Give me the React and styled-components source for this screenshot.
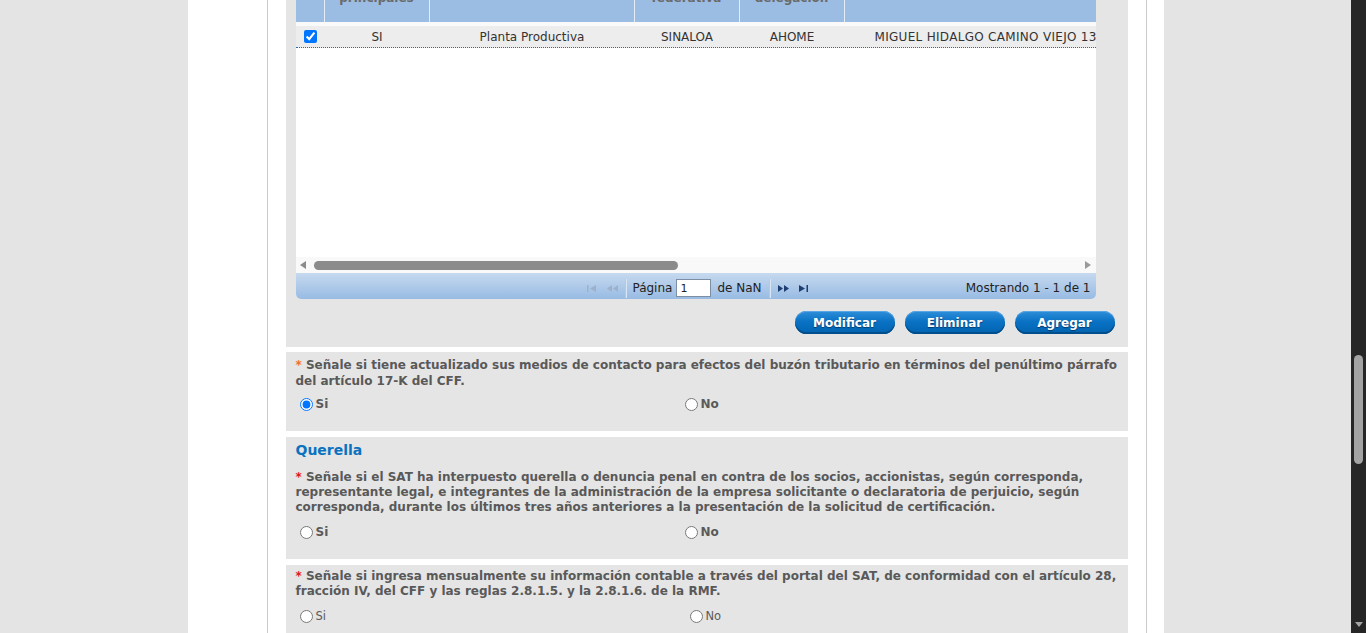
import styled, { createGlobalStyle } from "styled-components";

const GlobalStyle = createGlobalStyle`
  html, body {
    margin: 0;
    padding: 0;
    height: 100%;
    overflow: hidden;
    background: #e4e4e4;
  }
  body {
    font-family: "DejaVu Sans", Verdana, sans-serif;
    color: #333;
  }
`;

const columns = [
  { width: 29 },
  { width: 105, label: "Instalaciones principales" },
  { width: 205, label: "Tipo de instalación", top: true },
  { width: 105, label: "Entidad federativa" },
  { width: 105, label: "Municipio o delegación" },
  { width: 420, label: "Domicilio", top: true },
];

const row = ["", "SI", "Planta Productiva", "SINALOA", "AHOME", "MIGUEL HIDALGO CAMINO VIEJO 1300 COL. CENTRO"];

export default function App() {
  return (
    <>
      <GlobalStyle />
      <Viewport>
        <Sheet>
          <Sidebar />
          <Main>
            <GridPanel>
              <Grid>
                <HeaderRow>
                  {columns.map((c, i) => (
                    <HeadCell key={i} style={{ width: c.width }} $top={c.top}>
                      {c.label}
                    </HeadCell>
                  ))}
                </HeaderRow>
                <Body>
                  <DataRow>
                    {columns.map((c, i) => (
                      <Cell key={i} style={{ width: c.width }} $left={i === 5}>
                        {i === 0 ? <Check type="checkbox" defaultChecked /> : row[i]}
                      </Cell>
                    ))}
                  </DataRow>
                </Body>
                <HScroll>
                  <Arrow viewBox="0 0 6 8">
                    <path d="M6 0 L0 4 L6 8Z" />
                  </Arrow>
                  <Thumb />
                  <Arrow viewBox="0 0 6 8" $right>
                    <path d="M0 0 L6 4 L0 8Z" />
                  </Arrow>
                </HScroll>
                <Pager>
                  <span />
                  <PagerCenter>
                    <PagerIcon $off $w={9} $mr={10} viewBox="0 0 9 7">
                      <rect x="0" y="0" width="1.5" height="7" />
                      <path d="M9 0 L3 3.5 L9 7Z" />
                    </PagerIcon>
                    <PagerIcon $off $w={12} $mr={7} viewBox="0 0 12 7">
                      <path d="M6 0 L1 3.5 L6 7Z M12 0 L7 3.5 L12 7Z" />
                    </PagerIcon>
                    <Sep $mr={6} />
                    <PagerText $mr={4}>Página</PagerText>
                    <PageInput defaultValue="1" />
                    <PagerText $mr={7}>de NaN</PagerText>
                    <Sep $mr={8} />
                    <PagerIcon $w={11} $mr={10} viewBox="0 0 11 7">
                      <path d="M0 0 L5 3.5 L0 7Z M6 0 L11 3.5 L6 7Z" />
                    </PagerIcon>
                    <PagerIcon $w={9} viewBox="0 0 9 7">
                      <path d="M0 0 L6 3.5 L0 7Z" />
                      <rect x="7.5" y="0" width="1.5" height="7" />
                    </PagerIcon>
                  </PagerCenter>
                  <Showing>Mostrando 1 - 1 de 1</Showing>
                </Pager>
              </Grid>
              <Actions>
                <Button>Modificar</Button>
                <Button>Eliminar</Button>
                <Button>Agregar</Button>
              </Actions>
            </GridPanel>

            <Panel $pt={5} $pb={20}>
              <Question $lh={16}>
                <Star $orange>*</Star> Señale si tiene actualizado sus medios de contacto para efectos del
                buzón tributario en términos del penúltimo párrafo del artículo 17-K del CFF.
              </Question>
              <Choices $split={385} $mt={8}>
                <Choice>
                  <Radio type="radio" name="q1" defaultChecked />
                  Si
                </Choice>
                <Choice>
                  <Radio type="radio" name="q1" />
                  No
                </Choice>
              </Choices>
            </Panel>

            <Panel $pt={5} $pb={20}>
              <Title>Querella</Title>
              <Question $lh={15}>
                <Star>*</Star> Señale si el SAT ha interpuesto querella o denuncia penal en contra de los
                socios, accionistas, según corresponda, representante legal, e integrantes de la
                administración de la empresa solicitante o declaratoria de perjuicio, según corresponda,
                durante los últimos tres años anteriores a la presentación de la solicitud de certificación.
              </Question>
              <Choices $split={385} $mt={10}>
                <Choice>
                  <Radio type="radio" name="q2" />
                  Si
                </Choice>
                <Choice>
                  <Radio type="radio" name="q2" />
                  No
                </Choice>
              </Choices>
            </Panel>

            <Panel $pt={4} $pb={20}>
              <Question $lh={15}>
                <Star>*</Star> Señale si ingresa mensualmente su información contable a través del portal
                del SAT, de conformidad con el artículo 28, fracción IV, del CFF y las reglas 2.8.1.5. y la
                2.8.1.6. de la RMF.
              </Question>
              <Choices $split={390} $mt={10}>
                <Choice $plain>
                  <Radio type="radio" name="q3" />
                  Si
                </Choice>
                <Choice $plain>
                  <Radio type="radio" name="q3" />
                  No
                </Choice>
              </Choices>
            </Panel>
          </Main>
        </Sheet>
      </Viewport>
      <PageScrollbar>
        <PageThumb />
        <DownArrow viewBox="0 0 8 5">
          <path d="M0 0 L8 0 L4 5Z" />
        </DownArrow>
      </PageScrollbar>
    </>
  );
}

const Viewport = styled.div`
  width: calc(100% - 15px);
  height: 633px;
  overflow: hidden;
`;

const Sheet = styled.div`
  width: 976px;
  margin: -30px auto 0;
  min-height: 800px;
  background: #fff;
  display: flex;
`;

const Sidebar = styled.div`
  width: 79px;
  flex-shrink: 0;
`;

const Main = styled.div`
  width: 880px;
  box-sizing: border-box;
  border-left: 1px solid #cbcbcb;
  border-right: 1px solid #cbcbcb;
  padding: 0 18px;
  display: flex;
  flex-direction: column;
  gap: 6px;
`;

const GridPanel = styled.div`
  background: #e5e5e5;
  padding: 0 13px 13px 10px;
  margin-bottom: -1px;
`;

const Grid = styled.div`
  width: 800px;
  background: #fff;
  border-radius: 0 0 5px 5px;
  overflow: hidden;
`;

const HeaderRow = styled.div`
  display: flex;
  height: 52px;
  background: #9bbde4;
  overflow: hidden;
  border-bottom: 4px solid #fafafa;
`;

const HeadCell = styled.div`
  flex-shrink: 0;
  box-sizing: border-box;
  border-right: 1px solid #e4ecf6;
  display: flex;
  align-items: ${(p) => (p.$top ? "flex-start" : "flex-end")};
  justify-content: center;
  text-align: center;
  padding: ${(p) => (p.$top ? "2px 4px" : "0 4px 17px")};
  font-size: 12px;
  line-height: 14px;
  font-weight: bold;
  color: #6a6a6a;
`;

const Body = styled.div`
  height: 231px;
  overflow: hidden;
`;

const DataRow = styled.div`
  display: flex;
  height: 21px;
  background: #ededed;
  border-bottom: 1px dotted #1d6fb5;
`;

const Cell = styled.div`
  flex-shrink: 0;
  display: flex;
  align-items: center;
  justify-content: ${(p) => (p.$left ? "flex-start" : "center")};
  padding-left: ${(p) => (p.$left ? "30px" : "0")};
  letter-spacing: ${(p) => (p.$left ? "0.3px" : "0")};
  box-sizing: border-box;
  white-space: nowrap;
  overflow: hidden;
  font-size: 12px;
  color: #333;
`;

const Check = styled.input`
  margin: 0;
  width: 13px;
  height: 13px;
`;

const HScroll = styled.div`
  height: 16px;
  background: #f9f9f9;
  display: flex;
  align-items: center;
  padding: 0 5px 0 4px;
  gap: 8px;
`;

const Arrow = styled.svg`
  width: 6px;
  height: 8px;
  fill: ${(p) => (p.$right ? "#9a9a9a" : "#8a8a8a")};
  margin-left: ${(p) => (p.$right ? "auto" : "0")};
`;

const Thumb = styled.div`
  width: 364px;
  height: 9px;
  border-radius: 5px;
  background: #8b8b8b;
`;

const Pager = styled.div`
  height: 26px;
  box-sizing: border-box;
  padding-top: 4px;
  display: grid;
  grid-template-columns: 1fr auto 1fr;
  align-items: center;
  background: linear-gradient(#c6d9ef, #98bbe3);
  font-size: 12px;
  color: #222;
`;

const PagerCenter = styled.div`
  display: flex;
  align-items: center;
  margin-left: 4px;
`;

const PagerIcon = styled.svg`
  width: ${(p) => p.$w}px;
  height: 7px;
  margin-right: ${(p) => p.$mr || 0}px;
  fill: ${(p) => (p.$off ? "#9db1cc" : "#1f3f72")};
`;

const PagerText = styled.span`
  margin-right: ${(p) => p.$mr}px;
`;

const Sep = styled.span`
  width: 1px;
  height: 19px;
  background: #b2c8e3;
  box-shadow: 1px 0 0 #d8e5f3;
  margin-right: ${(p) => p.$mr}px;
`;

const PageInput = styled.input`
  width: 35px;
  height: 18px;
  box-sizing: border-box;
  border: 1px solid #7f8fa3;
  padding: 0 3px;
  font-family: inherit;
  font-size: 11px;
  color: #222;
  margin: 0 6px 0 0;
`;

const Showing = styled.span`
  justify-self: end;
  padding-right: 5px;
`;

const Actions = styled.div`
  display: flex;
  justify-content: flex-end;
  gap: 10px;
  margin-top: 12px;
`;

const Button = styled.button`
  width: 100px;
  height: 23px;
  border: none;
  border-radius: 12px;
  background: linear-gradient(#2f8fda 0%, #0a72c4 45%, #0063b0 100%);
  box-shadow: inset 0 -2px 0 #004e8c, inset 0 1px 0 #5aa6e4;
  color: #fff;
  font-family: inherit;
  font-size: 12px;
  font-weight: bold;
  text-shadow: 0 1px 1px #003a6a;
  padding: 0;
`;

const Panel = styled.div`
  background: #e5e5e5;
  padding: ${(p) => p.$pt}px 10px ${(p) => p.$pb}px;
`;

const Title = styled.div`
  font-size: 14px;
  font-weight: bold;
  color: #0b72c0;
  line-height: 16px;
  margin-bottom: 12px;
`;

const Question = styled.div`
  font-size: 12px;
  line-height: ${(p) => p.$lh}px;
  font-weight: bold;
  color: #595959;
`;

const Star = styled.span`
  color: ${(p) => (p.$orange ? "#f0702a" : "#e3151b")};
`;

const Choices = styled.div`
  display: grid;
  grid-template-columns: ${(p) => p.$split}px 1fr;
  margin-top: ${(p) => p.$mt}px;
  height: 14px;
`;

const Choice = styled.label`
  display: flex;
  align-items: center;
  font-size: ${(p) => (p.$plain ? "11.5px" : "12px")};
  font-weight: ${(p) => (p.$plain ? "normal" : "bold")};
  color: #5a5a5a;
`;

const Radio = styled.input`
  margin: 0 3px 0 4px;
  width: 13px;
  height: 13px;
`;

const PageScrollbar = styled.div`
  position: fixed;
  top: 0;
  right: 0;
  width: 15px;
  height: 100%;
  background: #262626;
`;

const PageThumb = styled.div`
  position: absolute;
  left: 3px;
  top: 355px;
  width: 9px;
  height: 109px;
  border-radius: 5px;
  background: #a3a3a3;
`;

const DownArrow = styled.svg`
  position: absolute;
  left: 4px;
  bottom: 6px;
  width: 8px;
  height: 5px;
  fill: #a3a3a3;
`;
